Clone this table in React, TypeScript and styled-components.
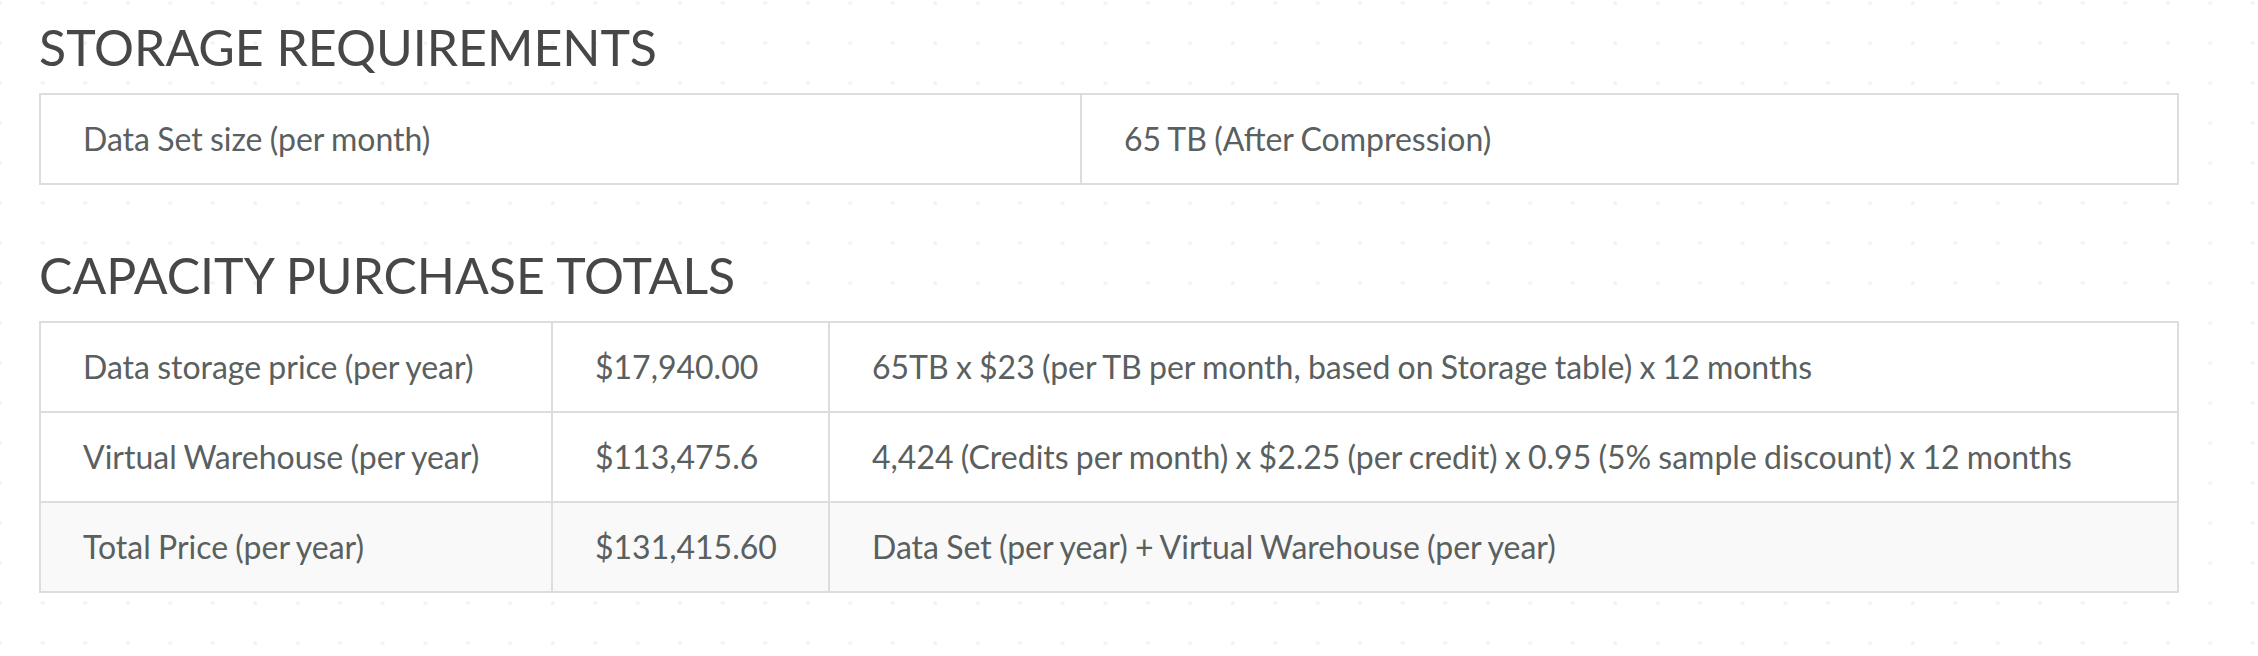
import React from "react";
import styled, { createGlobalStyle } from "styled-components";

const GlobalStyle = createGlobalStyle`
  html, body {
    margin: 0;
    padding: 0;
    background-color: #ffffff;
  }
  body {
    font-family: Lato, "Open Sans", "Liberation Sans", sans-serif;
    background-image: radial-gradient(circle, #f3f3f3 0, #f3f3f3 1.5px, transparent 2.5px);
    background-size: 42.5px 40px;
    background-position: -21px -17px;
    min-height: 656px;
  }
`;

const Page = styled.main`
  padding: 17px 81px 40px 39px;
  display: flex;
  flex-direction: column;
`;

const Section = styled.section<{ $gap?: number }>`
  display: flex;
  flex-direction: column;
  margin-top: ${(p) => p.$gap ?? 0}px;
`;

const Heading = styled.h2`
  margin: 0 0 16px 0;
  font-family: Lato, "Open Sans", "Liberation Sans", sans-serif;
  font-weight: 400;
  font-size: 50px;
  line-height: 1.2;
  color: #474747;
  letter-spacing: 0;
`;

const Table = styled.table`
  width: 100%;
  table-layout: fixed;
  border-collapse: collapse;
  background: #ffffff;
  border: 2px solid #dddddd;
`;

const Row = styled.tr<{ $shaded?: boolean }>`
  background: ${(p) => (p.$shaded ? "#f9f9f9" : "#ffffff")};
`;

const Cell = styled.td`
  border: 2px solid #dddddd;
  padding: 0 42px;
  height: 90px;
  box-sizing: border-box;
  vertical-align: middle;
  font-family: Lato, "Open Sans", "Liberation Sans", sans-serif;
  font-size: 32px;
  line-height: 38px;
  letter-spacing: 0;
  word-spacing: -1px;
  color: #5a5f5f;
  white-space: nowrap;
`;

const storageCols = [1041, 1097];
const totalsCols = [512, 277, 1349];

const totals = [
  {
    label: "Data storage price (per year)",
    price: "$17,940.00",
    note: "65TB x $23 (per TB per month, based on Storage table) x 12 months",
  },
  {
    label: "Virtual Warehouse (per year)",
    price: "$113,475.6",
    note: "4,424 (Credits per month) x $2.25 (per credit) x 0.95 (5% sample discount) x 12 months",
  },
  {
    label: "Total Price (per year)",
    price: "$131,415.60",
    note: "Data Set (per year) + Virtual Warehouse (per year)",
    shaded: true,
  },
];

export default function App() {
  return (
    <>
      <GlobalStyle />
      <Page>
        <Section>
          <Heading>STORAGE REQUIREMENTS</Heading>
          <Table>
            <colgroup>
              {storageCols.map((w, i) => (
                <col key={i} style={{ width: w }} />
              ))}
            </colgroup>
            <tbody>
              <Row>
                <Cell>Data Set size (per month)</Cell>
                <Cell>65 TB (After Compression)</Cell>
              </Row>
            </tbody>
          </Table>
        </Section>
        <Section $gap={60}>
          <Heading>CAPACITY PURCHASE TOTALS</Heading>
          <Table>
            <colgroup>
              {totalsCols.map((w, i) => (
                <col key={i} style={{ width: w }} />
              ))}
            </colgroup>
            <tbody>
              {totals.map((r) => (
                <Row key={r.label} $shaded={r.shaded}>
                  <Cell>{r.label}</Cell>
                  <Cell>{r.price}</Cell>
                  <Cell>{r.note}</Cell>
                </Row>
              ))}
            </tbody>
          </Table>
        </Section>
      </Page>
    </>
  );
}
